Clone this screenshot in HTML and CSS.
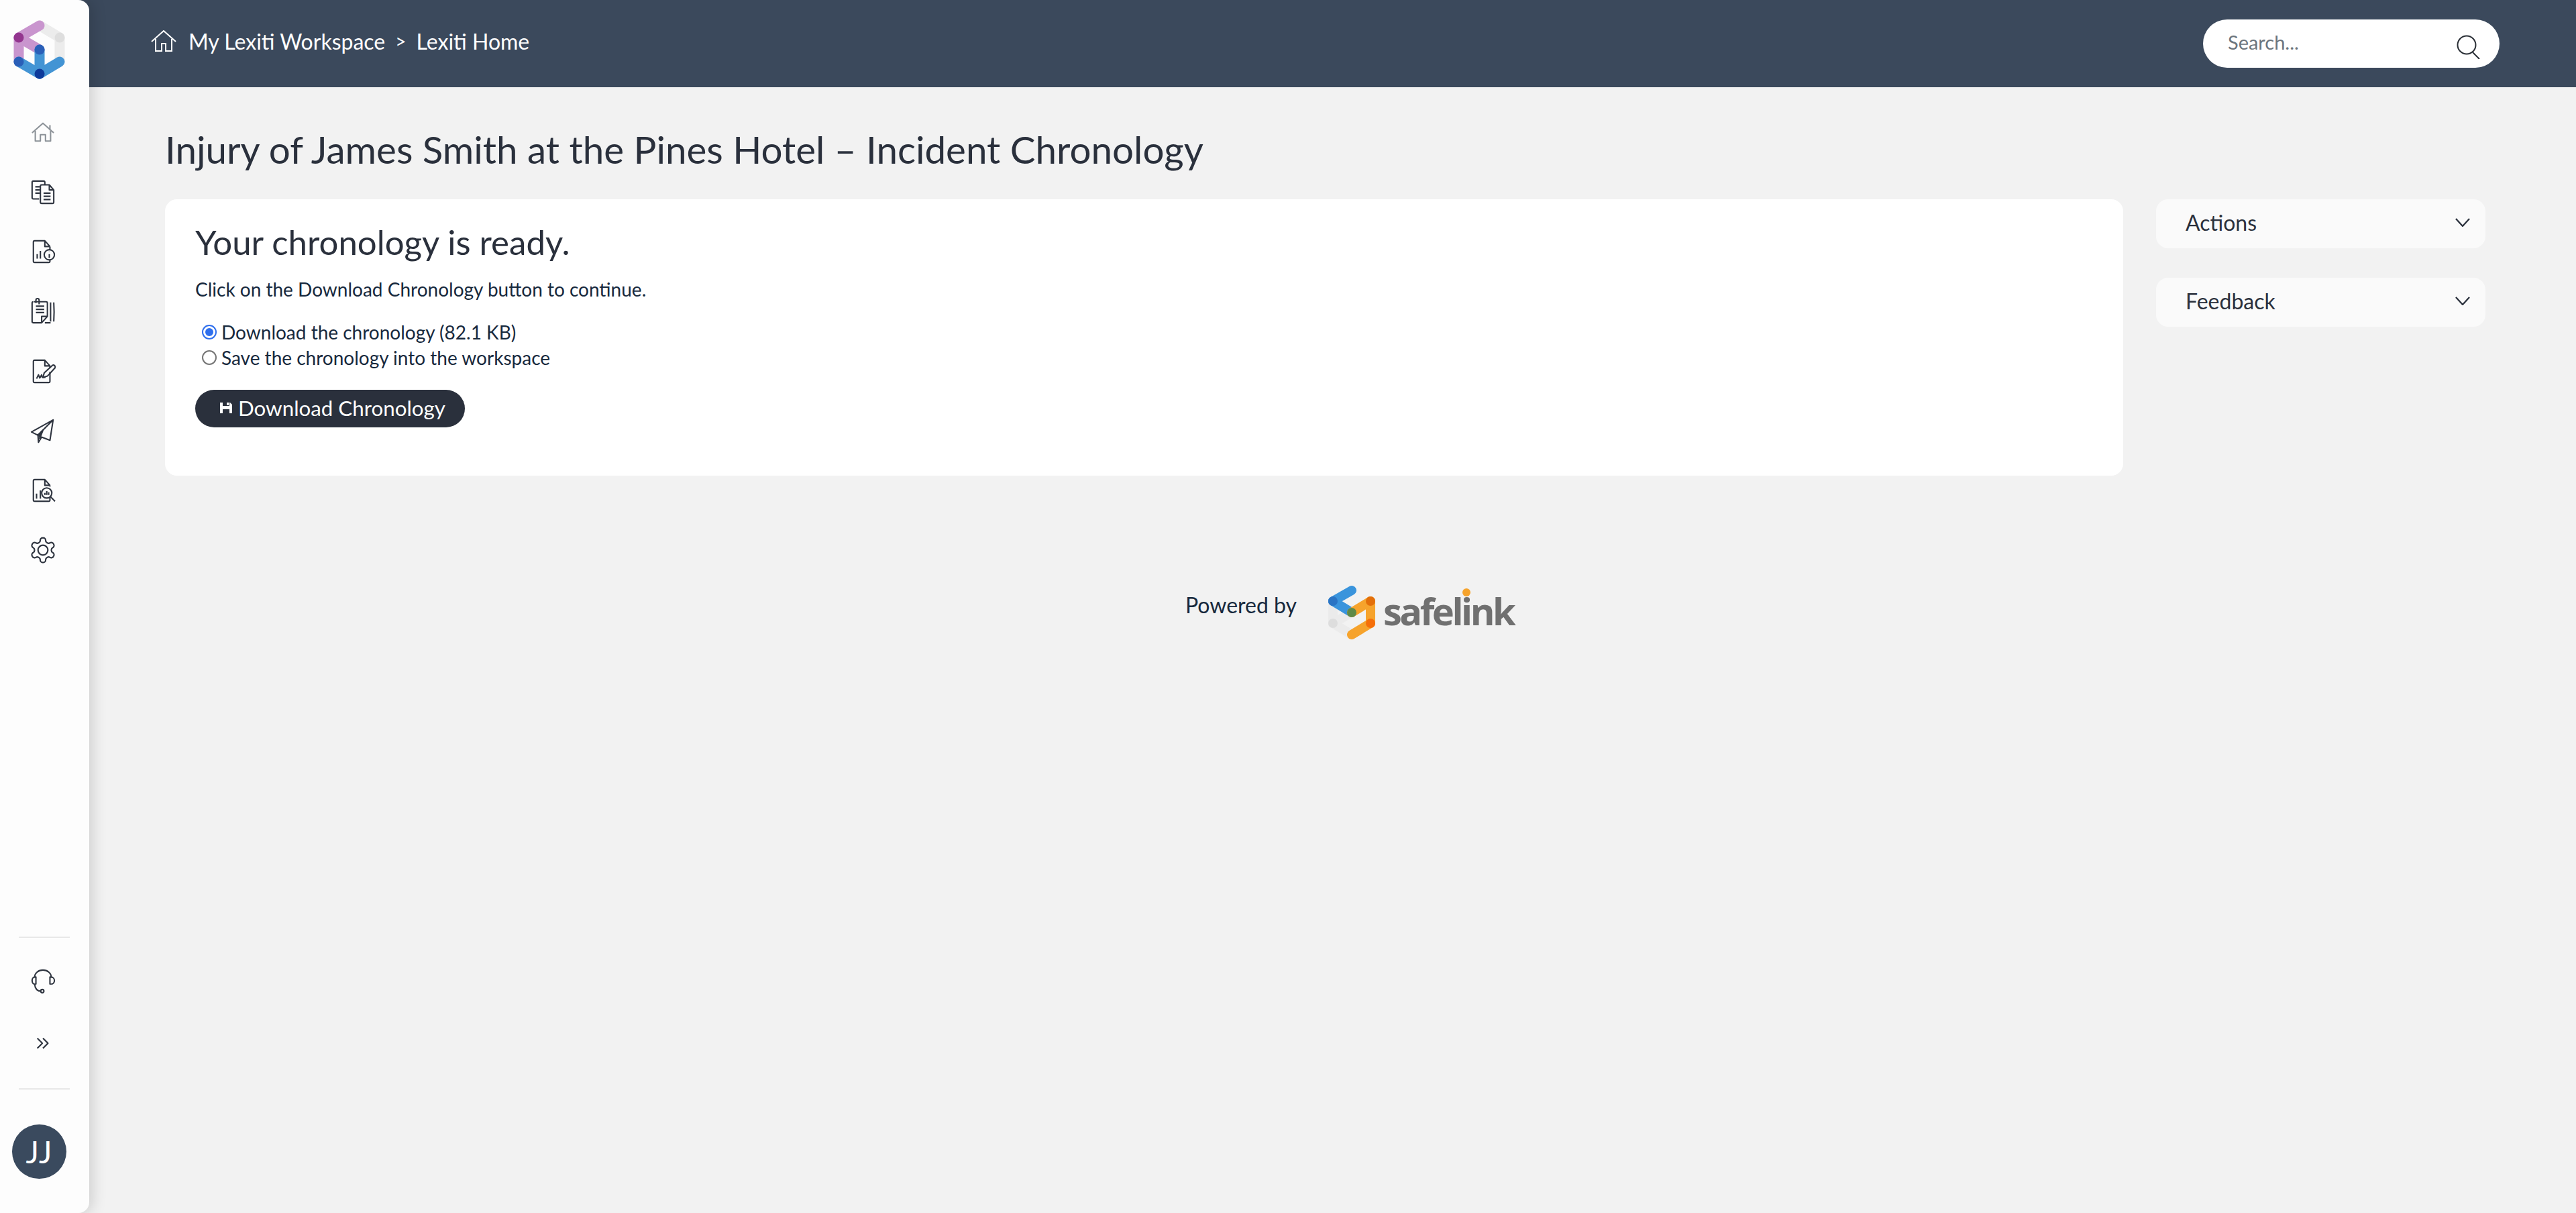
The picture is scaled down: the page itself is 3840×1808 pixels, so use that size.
FILE: index.html
```html
<!DOCTYPE html>
<html lang="en">
<head>
<meta charset="utf-8">
<title>Lexiti Chronology</title>
<link rel="stylesheet" href="styles.css">
</head>
<body>
<div class="app">
  <nav class="sidebar">
    <svg class="brand" viewBox="0 0 120 130" width="120" height="130" fill="none" stroke-linecap="round">
      <g stroke="#ececec" stroke-width="15"><path d="M59 38 89 56"/><path d="M89 56V92"/></g>
      <circle cx="89" cy="56" r="7.500" fill="#dedede"/>
      <g stroke="#c995ce" stroke-width="15"><path d="M59 38 28 56"/><path d="M28 56V92"/><path d="M28 56 59 74"/></g>
      <circle cx="28" cy="56" r="7.500" fill="#93358f"/>
      <g stroke="#4394d4" stroke-width="15"><path d="M28 92 59 110"/><path d="M59 110 89 92"/><path d="M59 74V110"/></g>
      <circle cx="28" cy="92" r="7.500" fill="#2a5fb8"/>
      <circle cx="59" cy="74" r="7.500" fill="#2a5fb8"/>
      <circle cx="59" cy="110" r="7.500" fill="#0e3a9a"/>
    </svg>
    <ul class="nav-list">
      <li class="nav-item"><svg class="ico faded" viewBox="0 0 40 40"><path d="M3 21 20 6l17 15M8 18v16h8V24h8v10h8V18M31 9v8"/></svg></li>
      <li class="nav-item"><svg class="ico" viewBox="0 0 40 40"><path d="M14 31H5a2 2 0 0 1-2-2V5a2 2 0 0 1 2-2h16a2 2 0 0 1 2 2v4"/><path d="M8 12h7M8 17h7M8 22h7"/><path d="M18 9h12l7 8v19a2 2 0 0 1-2 2H18a2 2 0 0 1-2-2V11a2 2 0 0 1 2-2zM30 9v8h7M21 22h11M21 27h11M21 32h11"/></svg></li>
      <li class="nav-item"><svg class="ico" viewBox="0 0 40 40"><path d="M31 12v6M31 12l-8-9H7a2 2 0 0 0-2 2v30a2 2 0 0 0 2 2h22a2 2 0 0 0 2-2v-2M23 3v9h8M11 31v-7M16 31V19"/><circle cx="30" cy="25" r="8"/><path d="M30 24v6M30 20.500v.5"/></svg></li>
      <li class="nav-item"><svg class="ico" viewBox="0 0 40 40"><path d="M6 5h19a2 2 0 0 1 2 2v21l-9 10H5a2 2 0 0 1-2-2V7a2 2 0 0 1 2-2M27 28h-9v10M9 12h13M9 17h13M9 22h13M9 7V2.500a2 2 0 0 1 5 0V9M32 6v30M37 6q1 15 0 30M23 38h9"/></svg></li>
      <li class="nav-item"><svg class="ico" viewBox="0 0 40 40"><path d="M31 21v15a2 2 0 0 1-2 2H7a2 2 0 0 1-2-2V5a2 2 0 0 1 2-2h16l8 9v3M23 3v9h8M10 32l3-6 2 5 3-5 1 4 5 0"/><path d="M20 30l2-7 13-12a3 3 0 0 1 4 4L27 28z"/></svg></li>
      <li class="nav-item"><svg class="ico" viewBox="0 0 40 40"><path d="M36 3 2 22l10 5 24-24-5 32-13-5-5 8-1-13M18 30l-5 2"/><path d="M12 27l8-8-4 11z" class="solid"/></svg></li>
      <li class="nav-item"><svg class="ico" viewBox="0 0 40 40"><path d="M31 12v2M31 12l-8-9H7a2 2 0 0 0-2 2v30a2 2 0 0 0 2 2h22a2 2 0 0 0 2-2v-4M23 3v9h8M10 33v-8M16 33V20"/><circle cx="26" cy="24" r="8"/><path d="M23 27v-3M26 27v-6M29 27v-4M32 30l7 7"/></svg></li>
      <li class="nav-item"><svg class="ico gear" viewBox="0 0 24 24"><path d="M12.220 2h-.44a2 2 0 0 0-2 2v.18a2 2 0 0 1-1 1.730l-.43.25a2 2 0 0 1-2 0l-.15-.08a2 2 0 0 0-2.730.73l-.22.38a2 2 0 0 0 .73 2.730l.15.1a2 2 0 0 1 1 1.720v.51a2 2 0 0 1-1 1.740l-.15.09a2 2 0 0 0-.73 2.730l.22.38a2 2 0 0 0 2.730.73l.15-.08a2 2 0 0 1 2 0l.43.25a2 2 0 0 1 1 1.730V20a2 2 0 0 0 2 2h.44a2 2 0 0 0 2-2v-.18a2 2 0 0 1 1-1.730l.43-.25a2 2 0 0 1 2 0l.15.08a2 2 0 0 0 2.730-.73l.22-.39a2 2 0 0 0-.73-2.730l-.15-.08a2 2 0 0 1-1-1.740v-.5a2 2 0 0 1 1-1.740l.15-.09a2 2 0 0 0 .73-2.730l-.22-.38a2 2 0 0 0-2.730-.73l-.15.08a2 2 0 0 1-2 0l-.43-.25a2 2 0 0 1-1-1.730V4a2 2 0 0 0-2-2z"/><circle cx="12" cy="12" r="4"/></svg></li>
    </ul>
    <div class="nav-foot">
      <hr class="rule">
      <div class="foot-item support"><svg class="ico" viewBox="0 0 40 40"><path d="M7 14V13a13 11 0 0 1 26 0v1M7 24q1 11 10 11"/><path d="M9 13v11H7a4 5.500 0 0 1 0-11zM31 13v11h2a5 5.500 0 0 0 0-11z"/><circle cx="19" cy="35" r="2.500"/></svg></div>
      <div class="foot-item chev"><svg class="ico" viewBox="0 0 24 24"><path d="M2 3l9 9-9 9M12 3l9 9-9 9"/></svg></div>
      <hr class="rule">
      <div class="avatar">JJ</div>
    </div>
  </nav>
  <div class="main">
    <header class="topbar">
      <nav class="crumbs">
        <svg class="crumb-home" viewBox="0 0 38 32"><path d="M1 17 19 1l18 16M7 13v18h9v-11h6v11h9V13"/></svg>
        <a>My Lexiti Workspace</a><span class="sep">&gt;</span><a>Lexiti Home</a>
      </nav>
      <div class="search">
        <input class="search-input" type="text" placeholder="Search...">
        <svg class="search-ico" viewBox="0 0 36 36"><circle cx="15" cy="15" r="13.500"/><path d="M24 26l10 10"/></svg>
      </div>
    </header>
    <main class="content">
      <h1 class="title">Injury of James Smith at the Pines Hotel – Incident Chronology</h1>
      <div class="columns">
        <section class="card">
          <h2 class="card-title">Your chronology is ready.</h2>
          <p class="card-text">Click on the Download Chronology button to continue.</p>
          <div class="options">
            <label class="option"><input type="radio" name="c" checked>Download the chronology (82.1 KB)</label>
            <label class="option"><input type="radio" name="c">Save the chronology into the workspace</label>
          </div>
          <button class="btn"><svg class="btn-ico" viewBox="0 0 18 18"><path d="M0 1h4v5h10V1h1l3 3v13H0zM4 11h10v6H4z" fill-rule="evenodd"/><path d="M10 1h3v4h-3z"/></svg>Download Chronology</button>
        </section>
        <aside class="side">
          <div class="panel"><span>Actions</span><svg class="panel-chev" viewBox="0 0 24 14"><path d="M1 1l11 12L23 1"/></svg></div>
          <div class="panel"><span>Feedback</span><svg class="panel-chev" viewBox="0 0 24 14"><path d="M1 1l11 12L23 1"/></svg></div>
        </aside>
      </div>
      <footer class="powered">
        <span class="powered-text">Powered by</span>
        <svg class="sl-logo" viewBox="0 0 72 86" fill="none" stroke-linecap="round">
          <g stroke="#e6e6e6" stroke-width="14" stroke-opacity=".55"><path d="M9 57V24M9 57l28 17M37 41 9 57"/></g>
          <circle cx="9" cy="57" r="7" fill="#dddddd"/>
          <g stroke="#3a94dc" stroke-width="14"><path d="M37 8 9 24"/><path d="M9 24 37 41"/></g>
          <circle cx="9" cy="24" r="7" fill="#2a74c4"/>
          <g stroke="#f6a32c" stroke-width="14"><path d="M37 41 65 24"/><path d="M65 24V57"/><path d="M65 57 37 74"/></g>
          <circle cx="65" cy="24" r="7" fill="#e36f0a"/>
          <circle cx="65" cy="57" r="7" fill="#f56f0a"/>
          <circle cx="37" cy="41" r="7" fill="#5f8a48"/>
        </svg>
        <span class="sl-word">safel<span class="sl-i">i</span>nk</span>
      </footer>
    </main>
  </div>
</div>
</body>
</html>
```
FILE: styles.css
```css
* { box-sizing: border-box; }
html, body { margin: 0; height: 100%; }
body { background: #f2f2f2; font-family: "Lato", "Noto Sans", sans-serif; color: #1e2a38; overflow: hidden; }
.app { display: flex; height: 1808px; }

.sidebar { width: 133px; flex: none; background: #fdfdfd; border-radius: 0 16px 16px 0; box-shadow: 4px 0 22px rgba(0,0,0,.16); position: relative; z-index: 2; display: flex; flex-direction: column; }
.brand { display: block; flex: none; }
.nav-list { list-style: none; margin: 22px 0 0; padding: 0; display: flex; flex-direction: column; }
.nav-item { height: 89px; display: flex; align-items: center; justify-content: center; padding-right: 5px; }
.ico { width: 38px; height: 38px; fill: none; stroke: #2f3540; stroke-width: 2.200; stroke-linejoin: round; overflow: visible; }
.ico.faded { stroke: #8c9298; }
.ico.gear { width: 44px; height: 44px; stroke-width: 1.200; }
.ico .solid { fill: #2f3540; }
.nav-foot { margin-top: auto; display: flex; flex-direction: column; padding-bottom: 51px; }
.rule { width: 76px; margin: 0 0 0 28px; border: 0; border-top: 2px solid #e8e8e8; }
.foot-item { display: flex; align-items: center; justify-content: center; padding-right: 5px; }
.foot-item.support { height: 130px; }
.foot-item.chev { height: 54px; margin-bottom: 40px; }
.chev .ico { width: 20px; height: 20px; stroke-width: 2.600; }
.avatar { width: 81px; height: 81px; margin: 52px 0 0 18px; border-radius: 50%; background: #3a4a5e; color: #fff; font-size: 46px; letter-spacing: 1px; line-height: 81px; text-align: center; }

.main { flex: 1; min-width: 0; margin-left: -20px; display: flex; flex-direction: column; }
.topbar { height: 130px; flex: none; background: #3b495c; display: flex; align-items: center; justify-content: space-between; padding: 0 114px 0 112px; }
.crumbs { display: flex; align-items: center; color: #fff; font-size: 32px; padding-bottom: 8px; }
.crumb-home { width: 38px; height: 32px; margin-right: 18px; fill: none; stroke: #fff; stroke-width: 2; }
.sep { margin: 0 15px; font-size: 28px; }
.search { width: 442px; height: 72px; border-radius: 36px; background: #fff; display: flex; align-items: center; padding: 0 28px 0 37px; }
.search-input { flex: 1; min-width: 0; border: 0; outline: 0; padding: 0; background: none; font: inherit; font-size: 29px; color: #333; margin-top: -6px; }
.search-input::placeholder { color: #6c757d; opacity: 1; }
.search-ico { width: 36px; height: 36px; margin-top: 9px; fill: none; stroke: #2a2f36; stroke-width: 2; }

.content { padding: 0 135px 0 133px; }
.title { margin: 53px 0 0; font-size: 56.500px; line-height: 78px; font-weight: 400; color: #2a303c; }
.columns { display: flex; gap: 49px; align-items: flex-start; margin-top: 36px; }
.card { flex: 1; height: 412px; background: #fff; border-radius: 18px; padding: 32px 45px; }
.card-title { margin: 0; font-size: 51px; line-height: 64px; font-weight: 400; color: #2a303c; }
.card-text { margin: 19px 0 0; font-size: 28px; line-height: 38px; color: #17293d; }
.options { display: flex; flex-direction: column; margin-top: 26px; padding-left: 8px; }
.option { display: flex; align-items: center; height: 38px; font-size: 28px; color: #17293d; }
.option input { appearance: none; width: 22px; height: 22px; margin: 0 7px 0 2px; padding: 3px; border: 2px solid #767676; border-radius: 50%; background: #fff content-box; }
.option input:checked { border-color: #2f6fed; background-color: #2f6fed; }
.btn { display: flex; align-items: center; height: 56px; width: 402px; margin-top: 29px; padding: 0 0 3px 37px; border: 0; border-radius: 28px; background: #2a303c; color: #fff; font: inherit; font-size: 31.300px; }
.btn-ico { width: 18px; height: 18px; margin-right: 9px; fill: #fff; }
.side { width: 491px; flex: none; display: flex; flex-direction: column; gap: 44px; }
.panel { height: 73px; background: #fafafa; border-radius: 18px; display: flex; align-items: center; justify-content: space-between; padding: 0 23px 4px 44px; font-size: 32px; color: #2a303c; }
.panel-chev { width: 22px; height: 13px; fill: none; stroke: #2a303c; stroke-width: 2.500; }

.powered { display: flex; align-items: center; margin: 163px 0 0 1521px; }
.powered-text { font-size: 32px; color: #17293d; margin-bottom: 28px; width: 211px; }
.sl-logo { width: 72px; height: 86px; flex: none; }
.sl-word { font-family: "Open Sans", sans-serif; font-weight: 700; font-size: 56px; letter-spacing: -3.500px; line-height: 1; color: #707070; margin-left: 12px; margin-bottom: 10px; }
.sl-i { position: relative; }
.sl-i::after { content: ""; position: absolute; left: 2px; top: 5px; width: 12px; height: 12px; border-radius: 50%; background: #f6a32c; }
```
